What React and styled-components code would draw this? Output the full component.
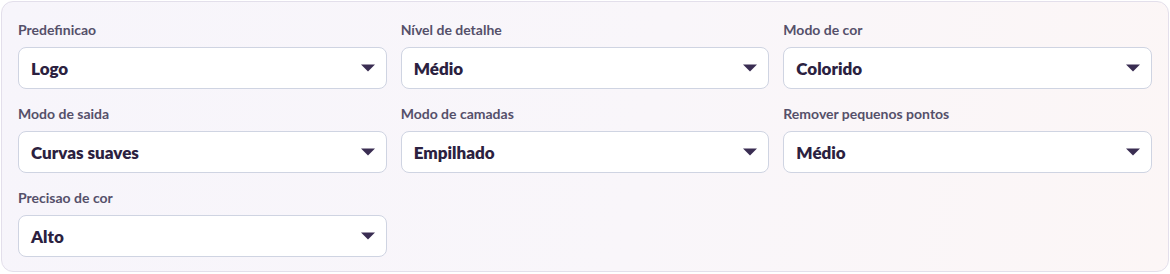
import React from "react";
import styled, { createGlobalStyle } from "styled-components";

const GlobalStyle = createGlobalStyle`
  html, body {
    margin: 0;
    padding: 0;
    background: #ffffff;
  }
  body {
    font-family: "Source Sans Pro", Lato, "Noto Sans", sans-serif;
  }
`;

const Page = styled.div`
  padding: 1px;
  width: 1170px;
  box-sizing: border-box;
`;

const Card = styled.div`
  box-sizing: border-box;
  height: 271px;
  border: 1px solid #e3dfeb;
  border-radius: 12px;
  background: linear-gradient(100deg, #f7f5fb 0%, #f9f6fa 55%, #fcf6f6 100%);
  padding: 19px 16px 13px 16px;
`;

const Grid = styled.div`
  display: grid;
  grid-template-columns: repeat(3, 1fr);
  column-gap: 14px;
  row-gap: 16px;
`;

const Field = styled.div`
  display: flex;
  flex-direction: column;
`;

const Label = styled.label`
  font-size: 14px;
  line-height: 18px;
  font-weight: 700;
  color: #55506a;
  margin-bottom: 8px;
`;

const Select = styled.div`
  box-sizing: border-box;
  height: 42px;
  display: flex;
  align-items: center;
  justify-content: space-between;
  padding: 0 11px 0 12px;
  background: #ffffff;
  border: 1px solid #cfd4e2;
  border-radius: 8px;
`;

const Value = styled.span`
  font-size: 17px;
  font-weight: 800;
  color: #2b2140;
`;

const Caret = styled.svg`
  width: 14px;
  height: 8px;
  display: block;
`;

const fields = [
  { label: "Predefinicao", value: "Logo" },
  { label: "Nível de detalhe", value: "Médio" },
  { label: "Modo de cor", value: "Colorido" },
  { label: "Modo de saida", value: "Curvas suaves" },
  { label: "Modo de camadas", value: "Empilhado" },
  { label: "Remover pequenos pontos", value: "Médio" },
  { label: "Precisao de cor", value: "Alto" },
];

const Dropdown = ({ label, value }) => (
  <Field>
    <Label>{label}</Label>
    <Select>
      <Value>{value}</Value>
      <Caret viewBox="0 0 14 8">
        <path d="M0 0.5 H14 L7 7.5 Z" fill="#3a2d52" />
      </Caret>
    </Select>
  </Field>
);

export default function App() {
  return (
    <Page>
      <GlobalStyle />
      <Card>
        <Grid>
          {fields.map(f => (
            <Dropdown key={f.label} label={f.label} value={f.value} />
          ))}
        </Grid>
      </Card>
    </Page>
  );
}
